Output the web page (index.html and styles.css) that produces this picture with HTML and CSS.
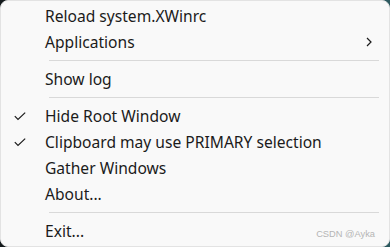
FILE: index.html
```html
<!DOCTYPE html>
<html>
<head>
<meta charset="utf-8">
<link rel="stylesheet" href="styles.css">
</head>
<body>
<div class="menu">
  <div class="item"><span class="check"></span><span class="label">Reload system.XWinrc</span></div>
  <div class="item"><span class="check"></span><span class="label">Applications</span>
    <svg class="chev" width="6" height="10" viewBox="0 0 6 10"><polyline points="1,1 5,5 1,9" fill="none" stroke="#1b1b1b" stroke-width="1.2"/></svg>
  </div>
  <div class="sep"></div>
  <div class="item"><span class="check"></span><span class="label">Show log</span></div>
  <div class="sep"></div>
  <div class="item"><span class="check"><svg width="12" height="9" viewBox="0 0 12 9"><polyline points="0.8,4.2 4,7.5 11.2,0.6" fill="none" stroke="#1b1b1b" stroke-width="1.2"/></svg></span><span class="label">Hide Root Window</span></div>
  <div class="item"><span class="check"><svg width="12" height="9" viewBox="0 0 12 9"><polyline points="0.8,4.2 4,7.5 11.2,0.6" fill="none" stroke="#1b1b1b" stroke-width="1.2"/></svg></span><span class="label">Clipboard may use PRIMARY selection</span></div>
  <div class="item"><span class="check"></span><span class="label">Gather Windows</span></div>
  <div class="item"><span class="check"></span><span class="label">About...</span></div>
  <div class="sep"></div>
  <div class="item"><span class="check"></span><span class="label">Exit...</span></div>
  <div class="watermark">CSDN @Ayka</div>
</div>
</body>
</html>
```
FILE: styles.css
```css
html, body {
  margin: 0;
  padding: 0;
}
body {
  width: 390px;
  height: 247px;
  background: linear-gradient(90deg, #141a1c 0%, #1d2a2e 60%, #2d5a60 100%);
  overflow: hidden;
}
.menu {
  position: relative;
  box-sizing: border-box;
  width: 390px;
  height: 247px;
  background: #f9f9f9;
  border: 1px solid #e3e3e3;
  border-radius: 8px;
  padding-top: 2px;
  font-family: "Noto Sans", "Open Sans", sans-serif;
  font-size: 15.6px;
  color: #1b1b1b;
}
.item {
  display: flex;
  align-items: center;
  height: 26px;
}
.check {
  width: 44px;
  display: flex;
  align-items: center;
  padding-left: 13px;
  box-sizing: border-box;
}
.check svg {
  display: block;
}
.label {
  flex: 1;
  white-space: nowrap;
  line-height: 26px;
}
.chev {
  display: block;
  margin-right: 17px;
}
.sep {
  height: 1px;
  background: #d9d9d9;
  margin: 5px 10px 5px 48px;
}
.watermark {
  position: absolute;
  right: 14px;
  bottom: 7px;
  font-family: "Liberation Sans", Arial, sans-serif;
  font-size: 9.3px;
  color: #b5b5b5;
}
```
